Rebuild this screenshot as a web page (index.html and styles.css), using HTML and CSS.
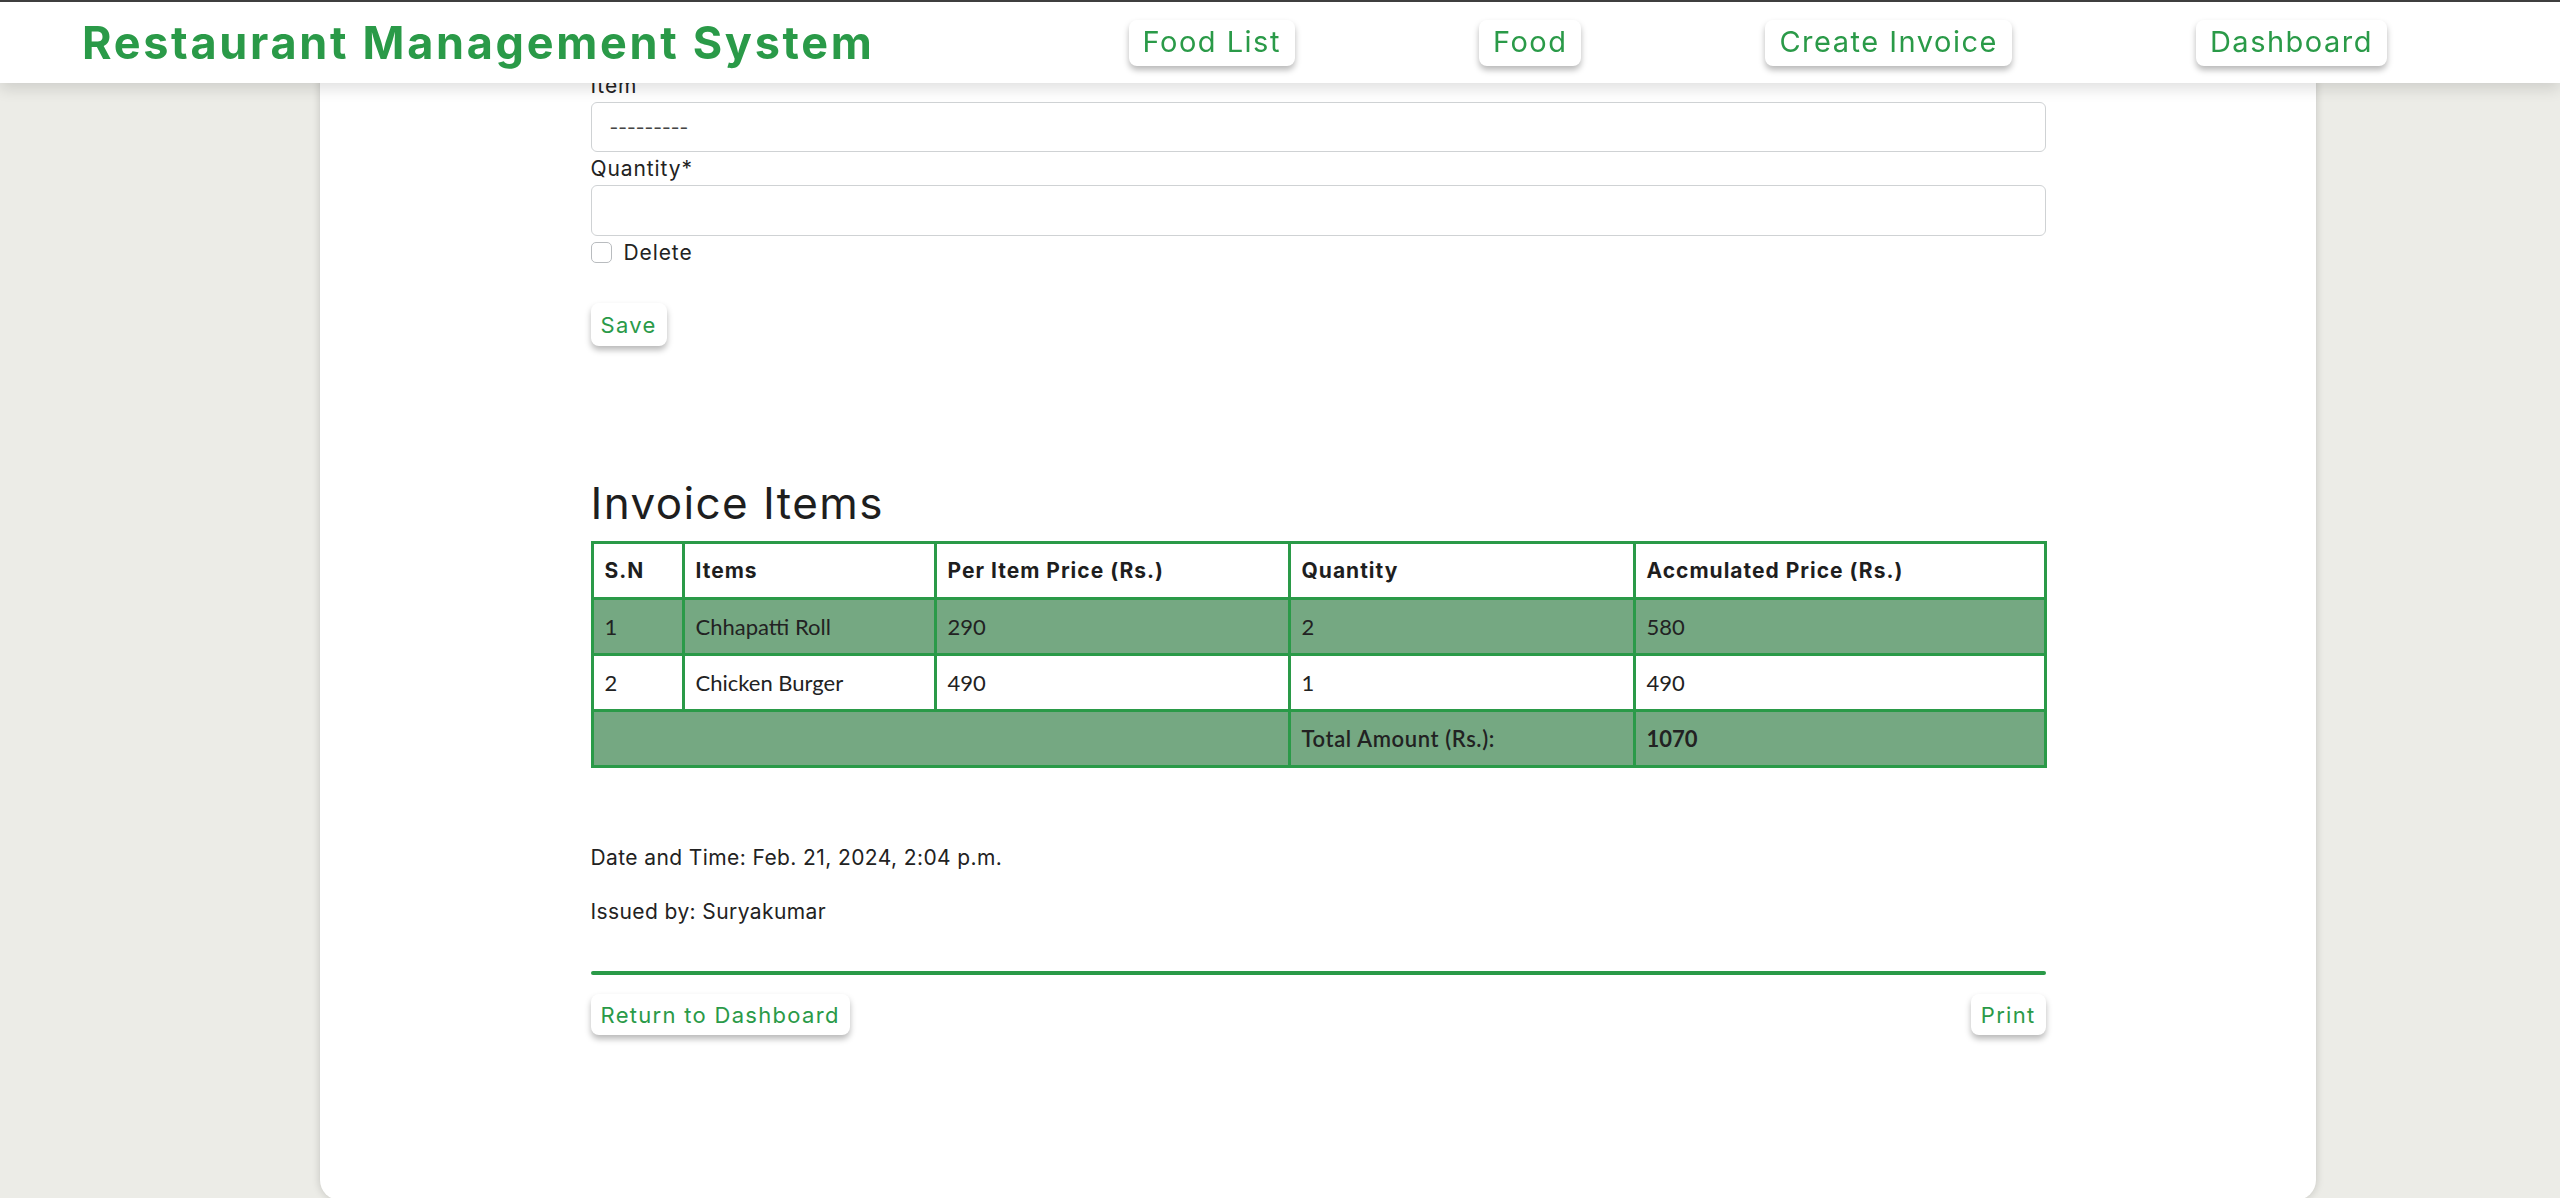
FILE: index.html
```html
<!DOCTYPE html>
<html lang="en">
<head>
<meta charset="utf-8">
<title>Restaurant Management System</title>
<link rel="stylesheet" href="styles.css">
</head>
<body>
<header class="topbar">
  <h1 class="brand">Restaurant Management System</h1>
  <nav class="nav">
    <a class="nav-btn" href="#">Food List</a>
    <a class="nav-btn" href="#">Food</a>
    <a class="nav-btn" href="#">Create Invoice</a>
    <a class="nav-btn" href="#">Dashboard</a>
  </nav>
</header>

<main class="card">
  <div class="content">
    <form class="form">
      <label class="label">Item</label>
      <select class="field select"><option>---------</option></select>
      <label class="label">Quantity*</label>
      <input class="field" type="text">
      <div class="check-row">
        <input class="check" type="checkbox">
        <span>Delete</span>
      </div>
      <button class="btn save" type="button">Save</button>
    </form>

    <h2 class="section-title">Invoice Items</h2>
    <table class="items">
      <colgroup>
        <col class="c1"><col class="c2"><col class="c3"><col class="c4"><col class="c5">
      </colgroup>
      <thead>
        <tr><th>S.N</th><th>Items</th><th>Per Item Price (Rs.)</th><th>Quantity</th><th>Accmulated Price (Rs.)</th></tr>
      </thead>
      <tbody>
        <tr class="shade"><td>1</td><td>Chhapatti Roll</td><td>290</td><td>2</td><td>580</td></tr>
        <tr><td>2</td><td>Chicken Burger</td><td>490</td><td>1</td><td>490</td></tr>
      </tbody>
      <tfoot>
        <tr class="shade"><td colspan="3"></td><td class="total-label">Total Amount (Rs.):</td><td class="total-value">1070</td></tr>
      </tfoot>
    </table>

    <p class="meta first">Date and Time: Feb. 21, 2024, 2:04 p.m.</p>
    <p class="meta">Issued by: Suryakumar</p>

    <hr class="rule">

    <div class="actions">
      <a class="btn" href="#">Return to Dashboard</a>
      <a class="btn" href="#">Print</a>
    </div>
  </div>
</main>
</body>
</html>
```

FILE: styles.css
```css
* { box-sizing: border-box; }

html, body {
  margin: 0;
  padding: 0;
}

body {
  background: #ecece7;
  font-family: Inter, "Open Sans", "DejaVu Sans", sans-serif;
  color: #222;
  font-size: 21px;
  letter-spacing: 0.4px;
}

.topbar {
  position: fixed;
  top: 0;
  left: 0;
  right: 0;
  z-index: 10;
  height: 83px;
  background: #fff;
  border-top: 2px solid #3f3f3f;
  box-shadow: 0 6px 14px rgba(0, 0, 0, 0.12);
  display: flex;
  align-items: center;
  justify-content: space-between;
  padding: 0 173px 0 82px;
}

.brand {
  margin: 0;
  font-size: 45px;
  font-weight: 700;
  color: #2a9a48;
  letter-spacing: 2.7px;
  line-height: 1;
}

.nav {
  display: flex;
  align-items: center;
  gap: 184px;
}

.nav-btn {
  display: flex;
  align-items: center;
  height: 46px;
  padding: 0 14px 2px;
  background: #fff;
  border-radius: 8px;
  box-shadow: 0 4px 6px rgba(0, 0, 0, 0.28);
  color: #2a9a48;
  text-decoration: none;
  font-size: 29px;
  letter-spacing: 1.5px;
}

.card {
  width: 1996px;
  margin: 0 0 0 320px;
  background: #fff;
  border-radius: 20px;
  box-shadow: 0 0 8px rgba(0, 0, 0, 0.18);
}

.content {
  width: 1455px;
  margin: 0 auto;
  padding: 69px 0 165px;
}

.form {
  display: flex;
  flex-direction: column;
  align-items: flex-start;
}

.label {
  display: block;
  line-height: 33px;
  font-size: 21px;
  color: #222;
  letter-spacing: 0.9px;
}

.field {
  display: block;
  width: 100%;
  height: 51px;
  border: 1px solid #cfd2d4;
  border-radius: 6px;
  background: #fff;
  font-family: inherit;
  font-size: 19px;
  padding: 0 18px;
  margin: 0;
}

.select {
  height: 50px;
  appearance: none;
  -webkit-appearance: none;
  color: #444;
}

.check-row {
  display: flex;
  align-items: center;
  gap: 12px;
  margin-top: 5px;
  height: 22px;
  font-size: 21px;
  letter-spacing: 0.9px;
}

.check {
  appearance: none;
  -webkit-appearance: none;
  width: 21px;
  height: 21px;
  margin: 0;
  border: 1px solid #b9bcbf;
  border-radius: 5px;
  background: #fff;
}

.btn {
  display: inline-flex;
  align-items: center;
  height: 42px;
  padding: 0 10px;
  background: #fff;
  border: 0;
  border-radius: 8px;
  box-shadow: 0 4px 6px rgba(0, 0, 0, 0.28);
  color: #2a9a48;
  text-decoration: none;
  font-family: inherit;
  font-size: 22px;
  letter-spacing: 1.3px;
}

.save {
  margin-top: 40px;
  height: 43px;
}

.section-title {
  margin: 131px 0 12px;
  font-size: 44px;
  line-height: 52px;
  font-weight: 400;
  color: #1e1e1e;
  letter-spacing: 1.4px;
}

.items {
  width: calc(100% - 2px);
  border-collapse: collapse;
  border: 3px solid #2a9a48;
  table-layout: fixed;
}

.c1 { width: 91px; }
.c2 { width: 252px; }
.c3 { width: 354px; }
.c4 { width: 345px; }
.c5 { width: 411px; }

.items th,
.items td {
  border: 3px solid #2a9a48;
  height: 56px;
  padding: 0 11px;
  text-align: left;
  vertical-align: middle;
}

.items th {
  font-weight: 700;
  font-size: 21px;
  color: #1e1e1e;
  letter-spacing: 1px;
}

.items td {
  font-family: Lato, "Open Sans", sans-serif;
  font-size: 22px;
  color: #222;
  letter-spacing: 0;
}

.items .shade td {
  background: #75a882;
}

.items .total-label {
  font-weight: 600;
  letter-spacing: 0.6px;
}

.items .total-value {
  font-weight: 700;
}

.meta {
  margin: 22px 0 0;
  line-height: 32px;
  font-size: 21px;
}

.meta.first {
  margin-top: 74px;
}

.rule {
  margin: 43px 0 0;
  height: 4px;
  border: 0;
  border-radius: 2px;
  background: #2a9a48;
}

.actions {
  display: flex;
  justify-content: space-between;
  margin-top: 19px;
}

.actions .btn {
  height: 41px;
}
```
